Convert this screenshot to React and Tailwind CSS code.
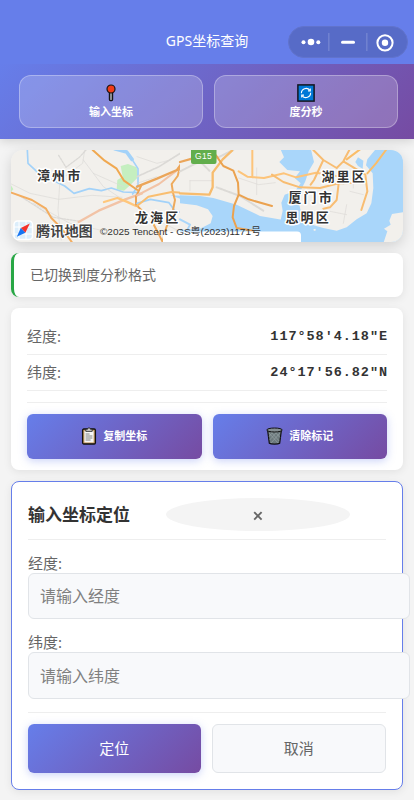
import React from "react";

const SANS = "font-['Noto_Sans','Noto_Sans_CJK_SC',sans-serif]";

function PinIcon() {
  return (
    <svg width="18" height="18" viewBox="0 0 18 18">
      <rect x="7.4" y="7" width="3.2" height="9.6" rx="1" fill="#8b8d92" stroke="#151515" strokeWidth="1.2" />
      <circle cx="9" cy="5" r="4" fill="#f03a17" stroke="#151515" strokeWidth="1.2" />
    </svg>
  );
}

function RefreshIcon() {
  return (
    <svg width="18" height="18" viewBox="0 0 18 18">
      <rect x="0.9" y="0.9" width="16.2" height="16.2" fill="#0078d7" stroke="#14161f" strokeWidth="1.5" />
      <g fill="none" stroke="#fff" strokeWidth="1.1">
        <path d="M4.4 9.2A4.7 4.7 0 0 1 12.800 6.200M13.600 8.800A4.700 4.700 0 0 1 5.200 11.800" />
        <path d="M11 6.900h2.300V4.600M7 11.100H4.700v2.300" />
      </g>
    </svg>
  );
}

function ClipboardIcon() {
  return (
    <svg width="16" height="18" viewBox="0 0 16 18">
      <rect x="1.600" y="2" width="12.800" height="15" rx="1.200" fill="#c69a60" stroke="#111" strokeWidth="1.300" />
      <rect x="3.400" y="3.800" width="9.200" height="11.600" fill="#f7f7f7" />
      <path d="M4.800 4.400V2.200h1.800a1.400 1.400 0 0 1 2.800 0h1.800v2.200z" fill="#c9c9c9" stroke="#222" strokeWidth=".8" />
      <path d="M4.600 7h4M4.600 9h6.800M4.600 11h6.800M4.600 13h5" stroke="#777" strokeWidth=".9" />
    </svg>
  );
}

function TrashIcon() {
  return (
    <svg width="17" height="18" viewBox="0 0 17 18">
      <path d="M1.600 3.200h13.800l-1.700 13c-1.700 1.100-8.700 1.100-10.400 0z" fill="#6c797c" stroke="#111" strokeWidth="1.200" />
      <path
        d="M3 6l9 10M5 5l8.200 9M9 5l5 5.500M14 6L5 16M11 5l-7.400 8M7 5L3 9.500"
        stroke="#9aa6a8"
        strokeWidth=".6"
      />
      <ellipse cx="8.500" cy="3" rx="7.700" ry="2" fill="#858f92" stroke="#111" strokeWidth="1" />
    </svg>
  );
}

function NavBar() {
  return (
    <div className="relative h-16 bg-[#667eea]">
      <div className="pt-[31px] text-center text-[14px] leading-[20px] text-white">GPS坐标查询</div>
      <div className="absolute left-[288px] top-[26px] flex h-8 w-[120px] items-center rounded-full border border-[#6173cc] bg-[#576bc7]">
        <svg width="118" height="30" viewBox="0 0 118 30" fill="#fff">
          <circle cx="14.5" cy="15.3" r="2" />
          <circle cx="22" cy="15" r="3.3" />
          <circle cx="29.3" cy="15.3" r="2" />
          <rect x="39" y="6" width="1.6" height="18" fill="#7081d0" />
          <rect x="52" y="13.7" width="14" height="3" rx="1.5" />
          <rect x="77" y="6" width="1.6" height="18" fill="#7081d0" />
          <circle cx="96" cy="15.8" r="7.6" fill="none" stroke="#fff" strokeWidth="2" />
          <circle cx="96" cy="15.8" r="3.2" />
        </svg>
      </div>
    </div>
  );
}

function ToolButton({ icon, label }) {
  return (
    <button className="flex h-[53px] flex-1 flex-col items-center rounded-xl border border-white/30 bg-white/20 pt-[8px] text-[11px] font-bold leading-[16px] text-white">
      {icon}
      <span className="mt-[2px]">{label}</span>
    </button>
  );
}

function MapLabel({ x, y, children }) {
  return (
    <text
      x={x}
      y={y}
      fontSize="13"
      fontWeight="700"
      letterSpacing="2.1"
      fill="#333"
      stroke="#fff"
      strokeWidth="3"
      strokeLinejoin="round"
      paintOrder="stroke"
    >
      {children}
    </text>
  );
}

function MapView() {
  return (
    <div className="h-[92px] overflow-hidden rounded-xl shadow-[0_4px_14px_rgba(0,0,0,0.15)]">
      <svg width="392" height="92" viewBox="0 0 392 92" className={SANS}>
        <rect width="392" height="92" fill="#f2f0ec" />

        {/* western part: rivers, park, roads */}
        <g transform="translate(-11 -10) scale(.33333)" fill="none" strokeLinecap="round" strokeLinejoin="round">
          <path d="M362 78l22-6 26 10 4 30-22 22-20 18-22-4 2-28 16-10z" fill="#c5efc0" />
          <path d="M33 136l7 12-7 8z" fill="#c5efc0" />
          <path d="M82 30l2 40 30 28 50 26 30 14 28 22 46-14 36 6 30-8 36 12 46 2" stroke="#a3d2f9" strokeWidth="5" />
          <path d="M344 26l36 10 16 22" stroke="#a3d2f9" strokeWidth="11" />
          <path d="M396 58l18 28v50l-16 26" stroke="#a3d2f9" strokeWidth="5" />
          <g stroke="#dbd9d6" strokeWidth="2">
            <path d="M34 132l56 28 86 18 100-12 90 6M180 120l-6 90 10 90M254 30l-6 40-60 44M250 60l60 80 60 40M100 190l110 60 90 20M280 100l90 40" />
            <path d="M176 46l22 36 40-30 20-22" strokeWidth="4" strokeDasharray="6 4" />
            <path d="M60 168l100 64 80 12" strokeWidth="4" strokeDasharray="6 4" />
          </g>
          <path d="M236 246l60-34 80-34 50-18" stroke="#f2c3a6" strokeWidth="7" />
          <path d="M34 158l62 22 42 26 16 28 26 26 28 36 10 14" stroke="#f3ad60" strokeWidth="6" />
          <path d="M278 30l36 32 36 24 22 36 40 28" stroke="#f0a850" strokeWidth="6" />
          <path d="M312 186l40-12 26 10 30 14" stroke="#ffc77c" strokeWidth="7" />
          <path d="M424 136l-16 34v24l16 16" stroke="#eca456" strokeWidth="6" />
        </g>

        {/* central part: town roads and river mouth */}
        <g transform="translate(126 -10) scale(.33333)" fill="none" strokeLinecap="round" strokeLinejoin="round">
          <path d="M0 190l40-12 56 10 20 28 40 0 14 16 40 8 12 12-14 16" stroke="#a3d2f9" strokeWidth="5" />
          <path d="M100 166l50 2 40 10-16 6-40-6z" fill="#a9d6fa" />
          <g stroke="#dbd9d6" strokeWidth="2">
            <path d="M0 50l60 20 40-10M60 240l60 30M0 130l60-20" />
            <path d="M0 110l66-30 70-44" strokeWidth="5" strokeDasharray="7 3" />
          </g>
          <path d="M0 166l66-34 50-38 30-26" stroke="#f2c3a6" strokeWidth="6" />
          <path d="M0 140l60-24 60-26 14-20 30-10" stroke="#eba559" strokeWidth="7" />
          <path d="M128 84l-6 24-18 24 4 26 6 22-6 30-20 52-10 40M48 250l18 34 10 20" stroke="#eeaa5c" strokeWidth="6" />
          <path d="M0 198l34-28 70-14 30 2" stroke="#f9be70" strokeWidth="6" />
        </g>

        {/* eastern part: estuary, bay and island */}
        <g transform="translate(169 -2) scale(.33333)" fill="none" strokeLinecap="round" strokeLinejoin="round">
          <path d="M0 0h680v290H0z" fill="#f2f0ec" />
          <path
            d="M0 142L60 144 100 150 170 170 240 204 310 216 330 232 380 226 430 240 470 248 500 238 530 214 560 196 574 166 580 120 578 76 558 52 562 34 590 0H680V290H0V246L60 242 92 226 98 204 84 184 50 172 0 166z"
            fill="#a9d6fa"
          />
          <path
            d="M300 0H392L402 42 386 70 376 100 362 128 358 170 366 206 380 228 330 234 302 216 308 188 304 164 314 140 346 128 362 106 344 90 360 70 322 66 298 42 312 28z"
            fill="#a9d6fa"
          />
          <path d="M534 28l16 10-2 24-14-8-8-12z" fill="#a9d6fa" />
          <path d="M672 192l-36 6-8 20 4 12-20 12 10 8-12 36h64z" fill="#f2f0ec" />
          <path d="M400 244l6-2 2 5-6 2z" fill="#f2f0ec" />
          <path d="M0 214l30 16-10 20" stroke="#a9d6fa" strokeWidth="6" />
          <g stroke="#dcdad6" strokeWidth="2">
            <path d="M30 98h70M30 98v30M176 90l60 20 50-6M230 60v80M500 170l-10 56M510 130l40 10M450 190l50 10M520 60v60M470 60l20 50" />
            <path d="M110 118l70 26 70 44M0 70l60-30 30 30M110 30l50-24" strokeWidth="6" strokeDasharray="7 3" />
          </g>
          <path d="M0 136l88 4 10-22 0-44 30-40 28-26" stroke="#f7bc6e" strokeWidth="7" />
          <path d="M0 42l36-10" stroke="#eba559" strokeWidth="7" />
          <path d="M108 22l22 32 30 14 14 36 2 36 30 14 70 20M176 140l-14 34-4 34 12 32 50 8" stroke="#eba24f" strokeWidth="6" />
          <path d="M217 6v82M176 70l26 16 50 4 60-14 36 12 60-14 60 10" stroke="#fdc47a" strokeWidth="6" />
          <path d="M276 80l34 22 50 16 60 2 56-14 60-2M400 6l30 30-14 30-14 30-10 14M430 36l40 24 20-20 18-34M490 40l40 24 26 16 6 50-18 56M476 106l-6 50-20 22-20 4" stroke="#f8bd72" strokeWidth="6" />
          <path d="M618 6l-30 40-26 30M500 34l40-30" stroke="#fabd68" strokeWidth="6" />
        </g>

        <rect x="152" y="81.500" width="138" height="16" rx="4" fill="#fff" />
        <rect x="180" y="-6" width="25.500" height="20" rx="2" fill="#62ae4c" />
        <text x="184" y="8.500" fontSize="8.500" letterSpacing=".3" fill="#fff" className="font-['Liberation_Sans',sans-serif]">
          G15
        </text>

        <MapLabel x="26" y="30">漳州市</MapLabel>
        <MapLabel x="124" y="71.500">龙海区</MapLabel>
        <MapLabel x="310.500" y="30.500">湖里区</MapLabel>
        <MapLabel x="277.500" y="52">厦门市</MapLabel>
        <MapLabel x="274.500" y="72">思明区</MapLabel>

        <rect x="3" y="71" width="18.500" height="18.500" rx="3.500" fill="#dceefb" stroke="#fff" strokeWidth="1.500" />
        <path d="M8 71v18M15 71v18M3 77h18M3 84h18" stroke="#fff" strokeWidth="1" />
        <path d="M18.800 73.500l-9 4.500 4.600 4.700z" fill="#f4322c" />
        <path d="M5.800 86.800l4-8.800 4.600 4.700z" fill="#1675f2" />
        <text x="25" y="85.500" fontSize="14.200" fontWeight="700" fill="#444" stroke="#fff" strokeWidth="2" paintOrder="stroke">
          腾讯地图
        </text>
        <text
          x="89"
          y="84.800"
          fontSize="9.700"
          fill="#333"
          textLength="161"
          lengthAdjust="spacingAndGlyphs"
          className="font-['Liberation_Sans','Noto_Sans_CJK_SC',sans-serif]"
        >
          ©2025 Tencent - GS粤(2023)1171号
        </text>
      </svg>
    </div>
  );
}

function CoordRow({ label, value }) {
  return (
    <div className="flex h-9 items-center justify-between border-b border-[#eee]">
      <span className="text-[15px] text-[#666]">{label}</span>
      <span className="-mr-px pt-px font-['Liberation_Mono',monospace] text-[13.5px] font-bold tracking-[0.95px] text-[#333]">
        {value}
      </span>
    </div>
  );
}

function ActionButton({ icon, label }) {
  return (
    <button className="flex h-[45px] flex-1 items-center justify-center gap-[6px] rounded-md bg-[linear-gradient(135deg,#667eea,#764ba2)] text-[11px] font-bold text-white shadow-[0_2px_8px_rgba(102,126,234,0.35)]">
      <span className="-mt-[2px]">{icon}</span>
      <span>{label}</span>
    </button>
  );
}

function Field({ label, placeholder, className }) {
  return (
    <div className={className}>
      <div className="h-5 text-[15px] leading-[20px] text-[#666]">{label}</div>
      <input
        placeholder={placeholder}
        className="block h-full w-[382px] rounded-md border border-[#e1e4e8] bg-[#f8f9fb] px-[11px] text-[16px] text-[#333] placeholder:text-[#808080]"
      />
    </div>
  );
}

export default function App() {
  return (
    <div className={`h-[800px] w-[414px] overflow-hidden bg-[#f4f4f4] ${SANS}`}>
      <NavBar />
      <div className="flex h-[75px] gap-[11px] bg-[linear-gradient(135deg,#667eea,#764ba2)] pl-[19px] pr-4 pt-[11px] shadow-[0_2px_10px_rgba(0,0,0,0.15)]">
        <ToolButton icon={<PinIcon />} label="输入坐标" />
        <ToolButton icon={<RefreshIcon />} label="度分秒" />
      </div>

      <main className="flex flex-col gap-[11px] px-[11px] pt-[11px]">
        <MapView />

        <div className="flex h-11 items-center rounded-lg border-l-[3px] border-[#28a745] bg-white pb-px pl-4 text-[14px] text-[#666] shadow-[0_2px_8px_rgba(0,0,0,0.08)]">
          已切换到度分秒格式
        </div>

        <section className="h-[162px] rounded-lg bg-white px-4 pt-[11px] shadow-[0_2px_8px_rgba(0,0,0,0.08)]">
          <CoordRow label="经度:" value={"117°58'4.18\"E"} />
          <CoordRow label="纬度:" value={"24°17'56.82\"N"} />
          <div className="mt-[11px] flex gap-[11px] border-t border-[#eee] pt-[11px]">
            <ActionButton icon={<ClipboardIcon />} label="复制坐标" />
            <ActionButton icon={<TrashIcon />} label="清除标记" />
          </div>
        </section>

        <section className="h-[309px] rounded-lg border border-[#667eea] bg-white px-4 pt-4 shadow-[0_2px_8px_rgba(0,0,0,0.08)]">
          <div className="flex h-[42px] border-b border-[#eee]">
            <h2 className="w-[138px] text-[17px] font-bold leading-[34px] text-[#333]">输入坐标定位</h2>
            <button className="flex h-[33px] w-[184px] items-center justify-center rounded-[50%] bg-[#f4f4f4] text-[#666]">
              <svg width="10" height="10" viewBox="0 0 10 10" className="mt-[3px]">
                <path d="M1.200 1.200l7.400 7.400M8.600 1.200L1.200 8.600" stroke="currentColor" strokeWidth="1.900" />
              </svg>
            </button>
          </div>
          <Field label="经度:" placeholder="请输入经度" className="mt-[13px] h-[46px]" />
          <Field label="纬度:" placeholder="请输入纬度" className="mt-[33px] h-[47px]" />
          <div className="mt-[33px] flex gap-[11px] border-t border-[#eee] pt-[11px] text-[15px]">
            <button className="h-[49px] flex-1 rounded-md bg-[linear-gradient(135deg,#667eea,#764ba2)] text-white shadow-[0_2px_8px_rgba(102,126,234,0.35)]">
              定位
            </button>
            <button className="h-[49px] flex-1 rounded-md border border-[#e1e4e8] bg-[#f8f9fb] text-[#666]">取消</button>
          </div>
        </section>
      </main>
    </div>
  );
}
